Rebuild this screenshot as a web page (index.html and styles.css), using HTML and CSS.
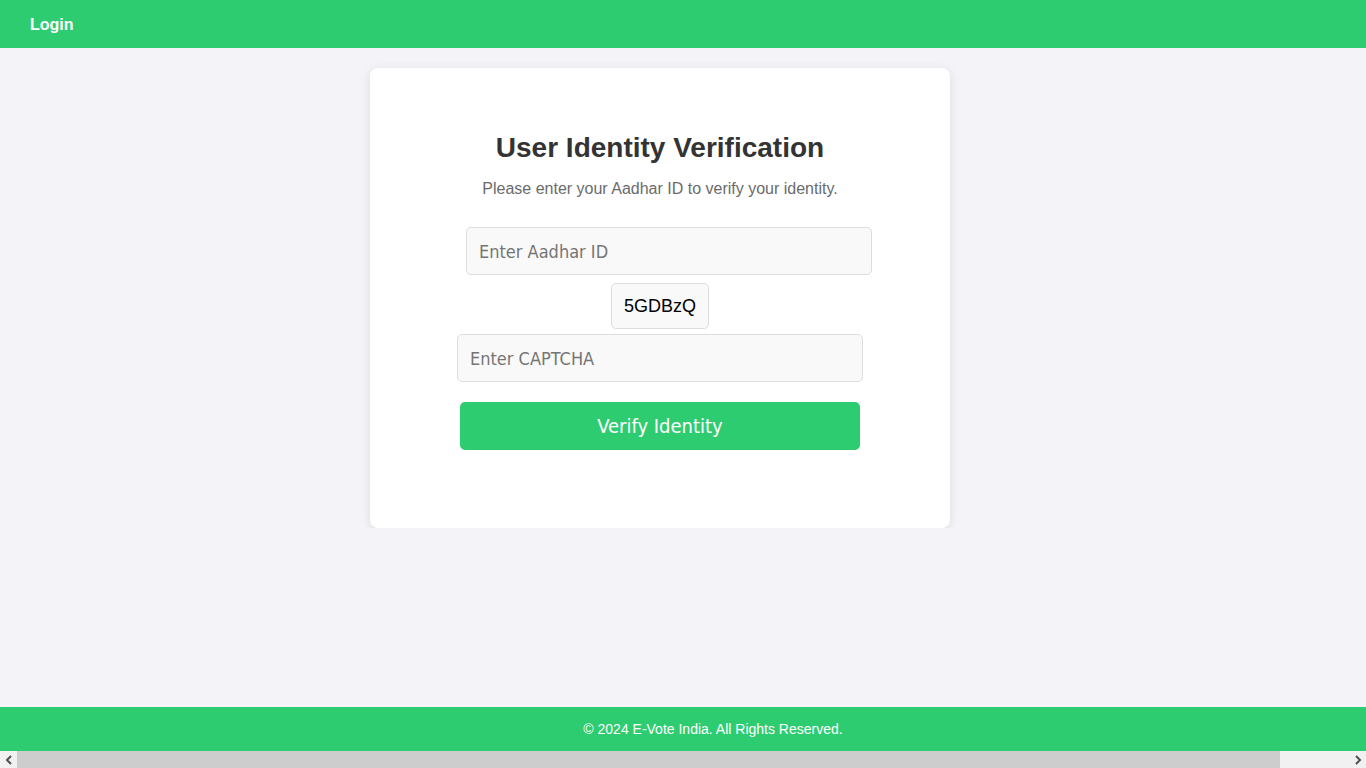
FILE: index.html
```html
<!DOCTYPE html>
<html lang="en">
<head>
<meta charset="UTF-8">
<title>User Identity Verification</title>
<link rel="stylesheet" href="styles.css">
</head>
<body>
<header class="topbar">
  <span class="topbar-title">Login</span>
</header>
<main class="page">
  <section class="card">
    <h2 class="card-title">User Identity Verification</h2>
    <p class="card-sub">Please enter your Aadhar ID to verify your identity.</p>
    <form class="verify-form">
      <input class="field field-aadhar" type="text" placeholder="Enter Aadhar ID">
      <div class="captcha">5GDBzQ</div>
      <input class="field field-captcha" type="text" placeholder="Enter CAPTCHA">
      <button class="verify-btn" type="button">Verify Identity</button>
    </form>
  </section>
</main>
<footer class="footer">
  <span class="footer-text">© 2024 E-Vote India. All Rights Reserved.</span>
</footer>
<div class="hscroll" aria-hidden="true">
  <span class="hscroll-btn">
    <svg width="8" height="10" viewBox="0 0 8 10"><path d="M6 1 L2 5 L6 9" fill="none" stroke="#505050" stroke-width="2"/></svg>
  </span>
  <span class="hscroll-thumb"></span>
  <span class="hscroll-track"></span>
  <span class="hscroll-btn">
    <svg width="8" height="10" viewBox="0 0 8 10"><path d="M2 1 L6 5 L2 9" fill="none" stroke="#505050" stroke-width="2"/></svg>
  </span>
</div>
</body>
</html>
```
FILE: styles.css
```css
html, body {
  margin: 0;
  padding: 0;
}
body {
  background: #f4f4f8;
  font-family: "Liberation Sans", Arial, sans-serif;
  color: #333;
}
.topbar {
  height: 48px;
  box-sizing: border-box;
  padding: 1px 30px 0;
  background: #2ecc71;
  display: flex;
  align-items: center;
}
.topbar-title {
  color: #fff;
  font-weight: bold;
  font-size: 16px;
}
.page {
  display: flex;
  justify-content: center;
  padding: 20px 46px 0 0;
}
.card {
  width: 580px;
  box-sizing: border-box;
  background: #fff;
  border-radius: 8px;
  box-shadow: 0 2px 10px rgba(0, 0, 0, 0.1);
  padding: 40px 0 78px;
  text-align: center;
}
.card-title {
  margin: 24px 0 16px;
  font-size: 28px;
  line-height: 32px;
  font-weight: bold;
  color: #333;
}
.card-sub {
  margin: 0 0 29px;
  font-size: 16px;
  line-height: 18px;
  color: #6b6b6b;
}
.verify-form {
  display: flex;
  flex-direction: column;
  align-items: center;
}
.field {
  box-sizing: border-box;
  width: 406px;
  height: 48px;
  padding: 0 12px;
  border: 1px solid #ddd;
  border-radius: 5px;
  background: #f9f9f9;
  font-family: "DejaVu Sans Condensed", "DejaVu Sans", sans-serif;
  font-stretch: condensed;
  font-size: 18px;
  color: #333;
  outline: none;
}
.field::placeholder {
  color: #757575;
}
.field-aadhar {
  margin-left: 18px;
}
.captcha {
  box-sizing: border-box;
  margin-top: 8px;
  height: 46px;
  padding: 0 12px;
  display: flex;
  align-items: center;
  border: 1px solid #ddd;
  border-radius: 5px;
  background: #f9f9f9;
  font-size: 18px;
  color: #000;
}
.field-captcha {
  margin-top: 5px;
}
.verify-btn {
  margin-top: 20px;
  width: 400px;
  height: 48px;
  border: none;
  border-radius: 5px;
  background: #2ecc71;
  color: #fff;
  font-family: "DejaVu Sans Condensed", "DejaVu Sans", sans-serif;
  font-stretch: condensed;
  font-size: 20px;
  cursor: pointer;
}
.footer {
  position: fixed;
  left: 0;
  right: 0;
  bottom: 17px;
  height: 44px;
  padding-left: 60px;
  background: #2ecc71;
  display: flex;
  align-items: center;
  justify-content: center;
}
.footer-text {
  color: #fff;
  font-size: 14px;
}
.hscroll {
  position: fixed;
  left: 0;
  right: 0;
  bottom: 0;
  height: 17px;
  display: flex;
  background: #f1f1f1;
}
.hscroll-btn {
  width: 17px;
  display: flex;
  align-items: center;
  justify-content: center;
}
.hscroll-thumb {
  width: 1263px;
  background: #cdcdcd;
}
.hscroll-track {
  flex: 1;
}
```
